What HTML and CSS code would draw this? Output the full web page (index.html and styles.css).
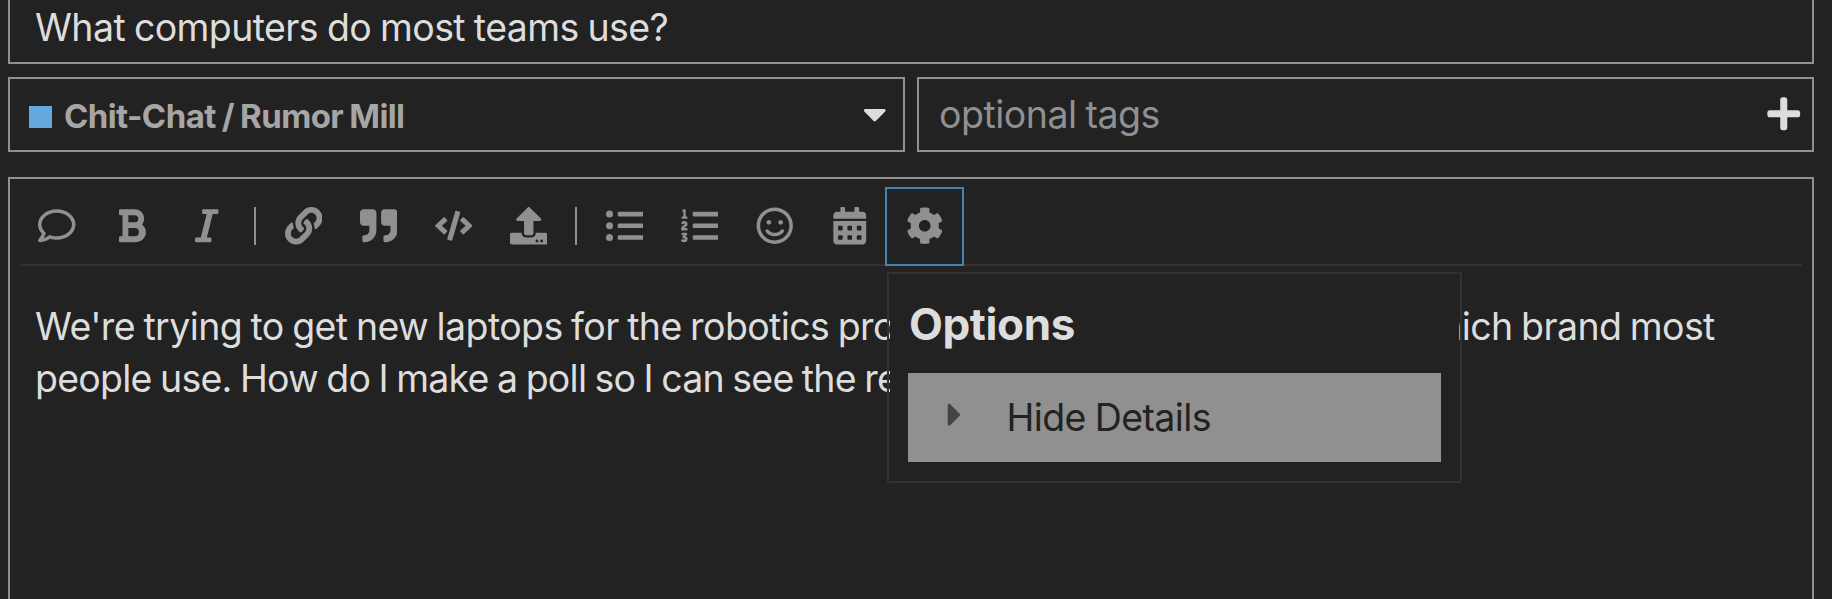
FILE: index.html
```html
<!DOCTYPE html>
<html lang="en">
<head>
    <meta charset="UTF-8" />
    <title>Create a new Topic</title>
    <link rel="stylesheet" href="styles.css">
</head>
<body>
    <div class="composer">
        <div class="title-input">What computers do most teams use?</div>

        <div class="title-row">
            <div class="select-box category">
                <span class="badge"></span>
                <span class="category-name">Chit-Chat / Rumor Mill</span>
                <svg class="icon caret" viewBox="0 0 320 512"><path d="M31.3 192h257.3c17.8 0 26.7 21.5 14.1 34.1L174.1 354.8c-7.8 7.8-20.5 7.8-28.3 0L17.2 226.1C4.6 213.5 13.5 192 31.3 192z"/></svg>
            </div>
            <div class="select-box tags">
                <span class="tags-placeholder">optional tags</span>
                <svg class="icon plus" viewBox="0 0 448 512"><path d="M416 208H272V64c0-17.67-14.33-32-32-32h-32c-17.67 0-32 14.33-32 32v144H32c-17.67 0-32 14.33-32 32v32c0 17.67 14.33 32 32 32h144v144c0 17.67 14.33 32 32 32h32c17.67 0 32-14.33 32-32V304h144c17.67 0 32-14.33 32-32v-32c0-17.67-14.33-32-32-32z"/></svg>
            </div>
        </div>

        <div class="editor">
            <div class="toolbar">
                <button class="btn"><svg class="icon" viewBox="0 0 512 512"><path d="M256 32C114.6 32 0 125.1 0 240c0 47.6 19.9 91.2 52.9 126.3C38 405.7 7 439.1 6.5 439.5c-6.6 7-8.4 17.2-4.6 26S14.4 480 24 480c61.5 0 110-25.7 139.1-46.3C192 442.8 223.2 448 256 448c141.4 0 256-93.1 256-208S397.4 32 256 32zm0 368c-26.7 0-53.1-4.1-78.4-12.1l-22.7-7.2-19.5 13.8c-14.3 10.1-33.9 21.4-57.5 29 7.3-12.1 14.4-25.7 19.9-40.2l10.6-28.1-20.6-21.8C69.7 314.1 48 282.2 48 240c0-88.2 93.3-160 208-160s208 71.8 208 160-93.3 160-208 160z"/></svg></button>
                <button class="btn"><svg class="icon" viewBox="0 0 384 512"><path d="M333.49 238a122 122 0 0 0 27-65.21C367.87 96.49 308 32 233.42 32H34a16 16 0 0 0-16 16v48a16 16 0 0 0 16 16h31.87v288H34a16 16 0 0 0-16 16v48a16 16 0 0 0 16 16h209.32c70.8 0 134.14-51.75 141-122.4 4.74-48.45-16.39-92.06-50.83-119.6zM145.66 112h87.76a48 48 0 0 1 0 96h-87.76zm87.76 288h-87.76V288h87.76a56 56 0 0 1 0 112z"/></svg></button>
                <button class="btn"><svg class="icon" viewBox="0 0 320 512"><path d="M320 48v32a16 16 0 0 1-16 16h-62.76l-80 320H208a16 16 0 0 1 16 16v32a16 16 0 0 1-16 16H16a16 16 0 0 1-16-16v-32a16 16 0 0 1 16-16h62.76l80-320H112a16 16 0 0 1-16-16V48a16 16 0 0 1 16-16h192a16 16 0 0 1 16 16z"/></svg></button>
                <div class="spacer"></div>
                <button class="btn"><svg class="icon" viewBox="0 0 512 512"><path d="M326.612 185.391c59.747 59.809 58.927 155.698.36 214.59-.11.12-.24.25-.36.37l-67.2 67.2c-59.27 59.27-155.699 59.262-214.96 0-59.27-59.26-59.27-155.7 0-214.96l37.106-37.106c9.84-9.84 26.786-3.3 27.294 10.606.648 17.722 3.826 35.527 9.69 52.721 1.986 5.822.567 12.262-3.783 16.612l-13.087 13.087c-28.026 28.026-28.905 73.66-1.155 101.96 28.024 28.579 74.086 28.749 102.325.51l67.2-67.19c28.191-28.191 28.073-73.757 0-101.83-3.701-3.694-7.429-6.564-10.341-8.569a16.037 16.037 0 0 1-6.947-12.606c-.396-10.567 3.348-21.456 11.698-29.806l21.054-21.055c5.521-5.521 14.182-6.199 20.584-1.731a152.482 152.482 0 0 1 20.522 17.197zM467.547 44.449c-59.261-59.262-155.69-59.27-214.96 0l-67.2 67.2c-.12.12-.25.25-.36.37-58.566 58.892-59.387 154.781.36 214.59a152.454 152.454 0 0 0 20.521 17.196c6.402 4.468 15.064 3.789 20.584-1.731l21.054-21.055c8.35-8.35 12.094-19.239 11.698-29.806a16.037 16.037 0 0 0-6.947-12.606c-2.912-2.005-6.64-4.875-10.341-8.569-28.073-28.073-28.191-73.639 0-101.83l67.2-67.19c28.239-28.239 74.3-28.069 102.325.51 27.75 28.3 26.872 73.934-1.155 101.96l-13.087 13.087c-4.35 4.35-5.769 10.79-3.783 16.612 5.864 17.194 9.042 34.999 9.69 52.721.509 13.906 17.454 20.446 27.294 10.606l37.106-37.106c59.271-59.259 59.271-155.699.001-214.959z"/></svg></button>
                <button class="btn"><svg class="icon" viewBox="0 0 512 512"><path d="M464 32H336c-26.5 0-48 21.5-48 48v128c0 26.5 21.5 48 48 48h80v64c0 35.3-28.7 64-64 64h-8c-13.3 0-24 10.7-24 24v48c0 13.3 10.7 24 24 24h8c88.4 0 160-71.6 160-160V80c0-26.5-21.5-48-48-48zm-288 0H48C21.5 32 0 53.5 0 80v128c0 26.5 21.5 48 48 48h80v64c0 35.3-28.7 64-64 64h-8c-13.3 0-24 10.7-24 24v48c0 13.3 10.7 24 24 24h8c88.4 0 160-71.6 160-160V80c0-26.5-21.5-48-48-48z"/></svg></button>
                <button class="btn"><svg class="icon" viewBox="0 0 640 512"><path d="M278.9 511.5l-61-17.7c-6.4-1.8-10-8.5-8.2-14.9L346.2 8.7c1.8-6.4 8.5-10 14.9-8.2l61 17.7c6.4 1.8 10 8.5 8.2 14.9L293.8 503.3c-1.9 6.4-8.5 10.1-14.9 8.2zm-114-112.2l43.5-46.4c4.6-4.9 4.3-12.7-.8-17.2L117 256l90.6-79.7c5.1-4.5 5.5-12.3.8-17.2l-43.5-46.4c-4.5-4.8-12.1-5.1-17-.5L3.8 247.2c-5.1 4.7-5.1 12.8 0 17.5l144.1 135.1c4.9 4.6 12.5 4.4 17-.5zm327.2.6l144.1-135.1c5.1-4.7 5.1-12.8 0-17.5L492.1 112.1c-4.8-4.5-12.4-4.3-17 .5L431.6 159c-4.6 4.9-4.3 12.7.8 17.2L523 256l-90.6 79.7c-5.1 4.5-5.5 12.3-.8 17.2l43.5 46.4c4.5 4.9 12.1 5.1 17 .6z"/></svg></button>
                <button class="btn"><svg class="icon" viewBox="0 0 512 512"><path d="M296 384h-80c-13.3 0-24-10.7-24-24V192h-87.7c-17.8 0-26.7-21.5-14.1-34.1L242.3 5.7c7.5-7.5 19.8-7.5 27.3 0l152.2 152.2c12.6 12.6 3.7 34.1-14.1 34.1H320v168c0 13.3-10.7 24-24 24zm216-8v112c0 13.3-10.7 24-24 24H24c-13.3 0-24-10.7-24-24V376c0-13.3 10.7-24 24-24h136v8c0 30.9 25.1 56 56 56h80c30.9 0 56-25.1 56-56v-8h136c13.3 0 24 10.7 24 24zm-124 88c0-11-9-20-20-20s-20 9-20 20 9 20 20 20 20-9 20-20zm64 0c0-11-9-20-20-20s-20 9-20 20 9 20 20 20 20-9 20-20z"/></svg></button>
                <div class="spacer"></div>
                <button class="btn"><svg class="icon" viewBox="0 0 512 512"><path d="M48 48a48 48 0 1 0 48 48 48 48 0 0 0-48-48zm0 160a48 48 0 1 0 48 48 48 48 0 0 0-48-48zm0 160a48 48 0 1 0 48 48 48 48 0 0 0-48-48zm448 16H176a16 16 0 0 0-16 16v32a16 16 0 0 0 16 16h320a16 16 0 0 0 16-16v-32a16 16 0 0 0-16-16zm0-320H176a16 16 0 0 0-16 16v32a16 16 0 0 0 16 16h320a16 16 0 0 0 16-16V80a16 16 0 0 0-16-16zm0 160H176a16 16 0 0 0-16 16v32a16 16 0 0 0 16 16h320a16 16 0 0 0 16-16v-32a16 16 0 0 0-16-16z"/></svg></button>
                <button class="btn"><svg class="icon" viewBox="0 0 512 512"><path d="M61.77 401l17.5-20.15a19.92 19.92 0 0 0 5.07-14.19v-3.31C84.34 356 80.5 352 73 352H16a8 8 0 0 0-8 8v16a8 8 0 0 0 8 8h22.83a157.41 157.41 0 0 0-11 12.31l-5.61 7c-4 5.07-5.25 10.13-2.8 14.88l1.05 1.93c3 5.76 6.29 7.88 12.25 7.88h4.73c10.33 0 15.94 2.44 15.94 9.09 0 4.72-4.2 8.22-14.36 8.22a41.54 41.54 0 0 1-15.47-3.12c-6.49-3.88-11.74-3.5-15.6 3.12l-5.59 9.31c-3.72 6.13-3.19 11.72 2.63 15.94 7.71 4.69 20.38 9.44 37 9.44 34.16 0 48.5-22.75 48.5-44.12-.03-14.38-9.12-29.76-28.73-34.88zM496 224H176a16 16 0 0 0-16 16v32a16 16 0 0 0 16 16h320a16 16 0 0 0 16-16v-32a16 16 0 0 0-16-16zm0-160H176a16 16 0 0 0-16 16v32a16 16 0 0 0 16 16h320a16 16 0 0 0 16-16V80a16 16 0 0 0-16-16zm0 320H176a16 16 0 0 0-16 16v32a16 16 0 0 0 16 16h320a16 16 0 0 0 16-16v-32a16 16 0 0 0-16-16zM16 160h64a8 8 0 0 0 8-8v-16a8 8 0 0 0-8-8H64V40a8 8 0 0 0-8-8H32a8 8 0 0 0-7.14 4.42l-8 16A8 8 0 0 0 24 64h8v64H16a8 8 0 0 0-8 8v16a8 8 0 0 0 8 8zm-3.91 160H80a8 8 0 0 0 8-8v-16a8 8 0 0 0-8-8H41.32c3.29-10.29 48.34-18.68 48.34-56.44 0-29.06-25-39.56-44.47-39.56-21.36 0-33.8 10-40.46 18.75-4.37 5.59-3 10.84 2.8 15.37l8.58 6.88c5.61 4.56 11 2.47 16.12-2.44a13.44 13.44 0 0 1 9.46-3.84c3.33 0 9.28 1.56 9.28 8.75C51 248.19 0 257.31 0 304.59v4C0 316 5.08 320 12.09 320z"/></svg></button>
                <button class="btn"><svg class="icon" viewBox="0 0 496 512"><path d="M248 8C111 8 0 119 0 256s111 248 248 248 248-111 248-248S385 8 248 8zm0 448c-110.3 0-200-89.7-200-200S137.7 56 248 56s200 89.7 200 200-89.7 200-200 200zm-80-216c17.7 0 32-14.3 32-32s-14.3-32-32-32-32 14.3-32 32 14.3 32 32 32zm160 0c17.7 0 32-14.3 32-32s-14.3-32-32-32-32 14.3-32 32 14.3 32 32 32zm4 72.6c-20.8 25-51.5 39.4-84 39.4s-63.2-14.3-84-39.4c-8.5-10.2-23.7-11.5-33.8-3.1-10.2 8.5-11.5 23.6-3.1 33.8 30 36 74.1 56.6 120.9 56.6s90.9-20.6 120.9-56.6c8.5-10.2 7.1-25.3-3.1-33.8-10.1-8.4-25.3-7.1-33.8 3.1z"/></svg></button>
                <button class="btn"><svg class="icon" viewBox="0 0 448 512"><path d="M0 464c0 26.5 21.5 48 48 48h352c26.5 0 48-21.5 48-48V192H0v272zm320-196c0-6.6 5.4-12 12-12h40c6.6 0 12 5.4 12 12v40c0 6.6-5.4 12-12 12h-40c-6.6 0-12-5.4-12-12v-40zm0 128c0-6.6 5.4-12 12-12h40c6.6 0 12 5.4 12 12v40c0 6.6-5.4 12-12 12h-40c-6.6 0-12-5.4-12-12v-40zM192 268c0-6.6 5.4-12 12-12h40c6.6 0 12 5.4 12 12v40c0 6.6-5.4 12-12 12h-40c-6.6 0-12-5.4-12-12v-40zm0 128c0-6.6 5.4-12 12-12h40c6.6 0 12 5.4 12 12v40c0 6.6-5.4 12-12 12h-40c-6.6 0-12-5.4-12-12v-40zM64 268c0-6.6 5.4-12 12-12h40c6.6 0 12 5.4 12 12v40c0 6.6-5.4 12-12 12H76c-6.6 0-12-5.4-12-12v-40zm0 128c0-6.6 5.4-12 12-12h40c6.6 0 12 5.4 12 12v40c0 6.6-5.4 12-12 12H76c-6.6 0-12-5.4-12-12v-40zM400 64h-48V16c0-8.8-7.2-16-16-16h-32c-8.8 0-16 7.2-16 16v48H160V16c0-8.8-7.2-16-16-16h-32c-8.8 0-16 7.2-16 16v48H48C21.5 64 0 85.5 0 112v48h448v-48c0-26.5-21.5-48-48-48z"/></svg></button>
                <div class="options">
                    <button class="btn active"><svg class="icon" viewBox="0 0 512 512"><path d="M487.4 315.7l-42.6-24.6c4.3-23.2 4.3-47 0-70.2l42.6-24.6c4.9-2.8 7.1-8.6 5.5-14-11.1-35.6-30-67.8-54.7-94.6-3.8-4.1-10-5.1-14.8-2.3L380.8 110c-17.9-15.4-38.5-27.3-60.8-35.1V25.8c0-5.6-3.9-10.5-9.4-11.7-36.7-8.2-74.3-7.8-109.2 0-5.5 1.2-9.4 6.1-9.4 11.7V75c-22.2 7.9-42.8 19.8-60.8 35.1L88.7 85.5c-4.9-2.8-11-1.9-14.8 2.3-24.7 26.7-43.6 58.9-54.7 94.6-1.7 5.4.6 11.2 5.5 14L67.3 221c-4.3 23.2-4.3 47 0 70.2l-42.6 24.6c-4.9 2.8-7.1 8.6-5.5 14 11.1 35.6 30 67.8 54.7 94.6 3.8 4.1 10 5.1 14.8 2.3l42.6-24.6c17.9 15.4 38.5 27.3 60.8 35.1v49.2c0 5.6 3.9 10.5 9.4 11.7 36.7 8.2 74.3 7.8 109.2 0 5.5-1.2 9.4-6.1 9.4-11.7v-49.2c22.2-7.9 42.8-19.8 60.8-35.1l42.6 24.6c4.9 2.8 11 1.9 14.8-2.3 24.7-26.7 43.6-58.9 54.7-94.6 1.5-5.5-.7-11.3-5.6-14.1zM256 336c-44.1 0-80-35.9-80-80s35.9-80 80-80 80 35.9 80 80-35.9 80-80 80z"/></svg></button>
                    <div class="options-menu">
                        <div class="options-body">
                            <h3>Options</h3>
                            <div class="option">
                                <svg class="icon option-icon" viewBox="0 0 192 512"><path d="M0 384.662V127.338c0-17.818 21.543-26.741 34.142-14.142l128.662 128.662c7.81 7.81 7.81 20.474 0 28.284L34.142 398.804C21.543 411.404 0 402.48 0 384.662z"/></svg>
                                <span class="option-name">Hide Details</span>
                            </div>
                        </div>
                    </div>
                </div>
            </div>
            <div class="text">
                <div class="line">We're trying to get new laptops for the robotics <span class="covered"><span>program and I am wondering</span><span>wh</span></span>ich brand most</div>
                <div class="line last">people use. How do I make a poll so I can see the results?</div>
            </div>
        </div>
    </div>
</body>
</html>
```

FILE: styles.css
```css
body {
    margin: 0;
    height: 599px;
    overflow: hidden;
    background: #222;
    color: #ddd;
    font-family: Inter, "Liberation Sans", sans-serif;
    font-size: 37.5px;
    letter-spacing: -0.6px;
    word-spacing: -1.1px;
}

.composer {
    display: flex;
    flex-direction: column;
    box-sizing: border-box;
    width: 1814px;
    height: 599px;
    padding-left: 8px;
}

.title-input {
    box-sizing: border-box;
    height: 64px;
    padding-left: 25px;
    border: 2px solid #909090;
    border-top: none;
    line-height: 55px;
    white-space: nowrap;
}

.title-row {
    display: flex;
    gap: 12px;
    margin-top: 13px;
}

.select-box {
    display: flex;
    align-items: center;
    box-sizing: border-box;
    width: 897px;
    height: 75px;
    border: 2px solid #909090;
}

.icon {
    display: block;
    width: 37.5px;
    height: 37.5px;
    fill: currentColor;
}

.category {
    padding: 0 10px 0 19px;
}

.badge {
    width: 23px;
    height: 22px;
    margin: 5px 12px 0 0;
    background: #63a9df;
}

.category-name {
    padding-top: 3px;
    color: #a6a6a6;
    font-size: 33px;
    font-weight: bold;
    letter-spacing: -0.6px;
}

.caret, .plus {
    margin: 0 0 1px auto;
}

.tags {
    padding: 0 10px 0 20px;
}

.tags-placeholder {
    color: #909090;
    letter-spacing: -0.5px;
}

.editor {
    flex: 1;
    margin-top: 25px;
    border: 2px solid #909090;
    border-bottom: none;
}

.toolbar {
    display: flex;
    align-items: center;
    height: 75px;
    margin: 10px 10px 0;
    border-bottom: 2px solid #313131;
}

.btn {
    display: flex;
    justify-content: center;
    align-items: center;
    box-sizing: border-box;
    width: 75px;
    height: 75px;
    padding: 0 0 1px;
    background: none;
    border: none;
    color: #909090;
}

.btn:first-child {
    margin-left: -0.5px;
}

.btn.active {
    margin-left: 0;
    outline: 2px solid #4682ae;
}

.spacer {
    width: 2px;
    height: 38px;
    margin: 0 9.75px 1px 9.5px;
    background: #909090;
}

.options {
    position: relative;
}

.options-menu {
    position: absolute;
    top: 83px;
    left: 0;
    box-sizing: border-box;
    width: 575px;
    height: 211px;
    padding: 1px;
    border: 2px solid #313131;
}

.options-body {
    box-sizing: border-box;
    height: 100%;
    padding: 23px 18px 0;
    background: #222;
}

.options-body h3 {
    margin: 0 0 23px;
    padding-left: 1px;
    font-size: 44px;
    line-height: 52px;
    letter-spacing: -0.4px;
}

.option {
    display: flex;
    align-items: center;
    height: 89px;
    background: #909090;
    color: #222;
}

.option-icon {
    margin: 0 33px 5px 28px;
    color: #444;
}

.text {
    padding: 35px 0 0 25px;
    line-height: 52px;
    white-space: nowrap;
}

.line {
    word-spacing: -1.5px;
}

.last {
    letter-spacing: -0.75px;
}

.covered {
    display: inline-flex;
    justify-content: space-between;
    width: 624px;
}
```
